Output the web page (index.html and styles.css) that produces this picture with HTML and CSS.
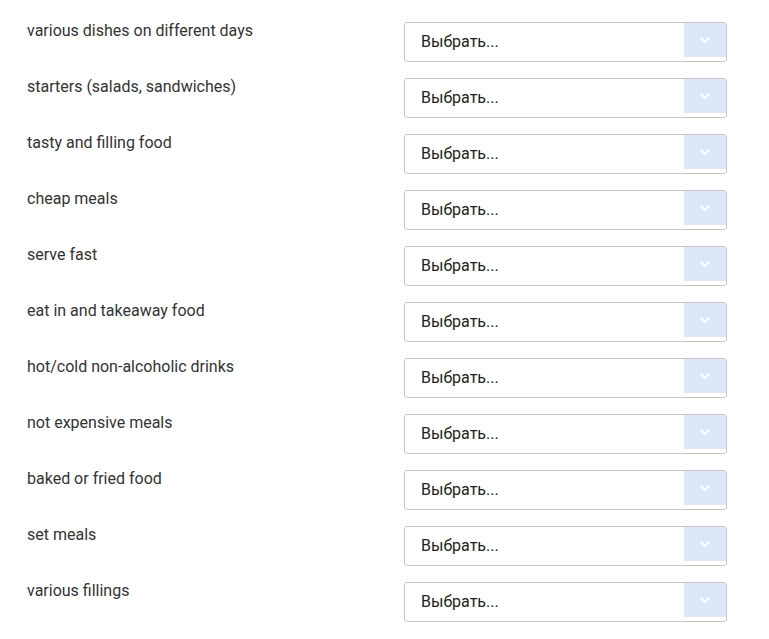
FILE: index.html
```html
<!DOCTYPE html>
<html>
<head>
<meta charset="utf-8">
<link rel="stylesheet" href="styles.css">
</head>
<body>
<div class="list">
  <div class="row"><div class="label">various dishes on different days</div><div class="select"><span class="value">Выбрать...</span><span class="btn"><svg width="10" height="6" viewBox="0 0 10 6"><path d="M1 1 L5 5 L9 1" fill="none" stroke="#fff" stroke-width="2.2"/></svg></span></div></div>
  <div class="row"><div class="label">starters (salads, sandwiches)</div><div class="select"><span class="value">Выбрать...</span><span class="btn"><svg width="10" height="6" viewBox="0 0 10 6"><path d="M1 1 L5 5 L9 1" fill="none" stroke="#fff" stroke-width="2.2"/></svg></span></div></div>
  <div class="row"><div class="label">tasty and filling food</div><div class="select"><span class="value">Выбрать...</span><span class="btn"><svg width="10" height="6" viewBox="0 0 10 6"><path d="M1 1 L5 5 L9 1" fill="none" stroke="#fff" stroke-width="2.2"/></svg></span></div></div>
  <div class="row"><div class="label">cheap meals</div><div class="select"><span class="value">Выбрать...</span><span class="btn"><svg width="10" height="6" viewBox="0 0 10 6"><path d="M1 1 L5 5 L9 1" fill="none" stroke="#fff" stroke-width="2.2"/></svg></span></div></div>
  <div class="row"><div class="label">serve fast</div><div class="select"><span class="value">Выбрать...</span><span class="btn"><svg width="10" height="6" viewBox="0 0 10 6"><path d="M1 1 L5 5 L9 1" fill="none" stroke="#fff" stroke-width="2.2"/></svg></span></div></div>
  <div class="row"><div class="label">eat in and takeaway food</div><div class="select"><span class="value">Выбрать...</span><span class="btn"><svg width="10" height="6" viewBox="0 0 10 6"><path d="M1 1 L5 5 L9 1" fill="none" stroke="#fff" stroke-width="2.2"/></svg></span></div></div>
  <div class="row"><div class="label">hot/cold non-alcoholic drinks</div><div class="select"><span class="value">Выбрать...</span><span class="btn"><svg width="10" height="6" viewBox="0 0 10 6"><path d="M1 1 L5 5 L9 1" fill="none" stroke="#fff" stroke-width="2.2"/></svg></span></div></div>
  <div class="row"><div class="label">not expensive meals</div><div class="select"><span class="value">Выбрать...</span><span class="btn"><svg width="10" height="6" viewBox="0 0 10 6"><path d="M1 1 L5 5 L9 1" fill="none" stroke="#fff" stroke-width="2.2"/></svg></span></div></div>
  <div class="row"><div class="label">baked or fried food</div><div class="select"><span class="value">Выбрать...</span><span class="btn"><svg width="10" height="6" viewBox="0 0 10 6"><path d="M1 1 L5 5 L9 1" fill="none" stroke="#fff" stroke-width="2.2"/></svg></span></div></div>
  <div class="row"><div class="label">set meals</div><div class="select"><span class="value">Выбрать...</span><span class="btn"><svg width="10" height="6" viewBox="0 0 10 6"><path d="M1 1 L5 5 L9 1" fill="none" stroke="#fff" stroke-width="2.2"/></svg></span></div></div>
  <div class="row"><div class="label">various fillings</div><div class="select"><span class="value">Выбрать...</span><span class="btn"><svg width="10" height="6" viewBox="0 0 10 6"><path d="M1 1 L5 5 L9 1" fill="none" stroke="#fff" stroke-width="2.2"/></svg></span></div></div>
</div>
</body>
</html>
```
FILE: styles.css
```css
html, body {
  margin: 0;
  padding: 0;
  background: #fff;
}
body {
  font-family: Roboto, "Liberation Sans", sans-serif;
  font-size: 16px;
  color: #333;
}
.list {
  padding: 22px 0 0 27px;
  display: flex;
  flex-direction: column;
  gap: 16px;
}
.row {
  display: flex;
  align-items: flex-start;
  height: 40px;
}
.label {
  width: 377px;
  line-height: 18px;
  padding-top: 0;
  color: #333;
}
.select {
  box-sizing: border-box;
  width: 323px;
  height: 40px;
  border: 1px solid #c6c6c6;
  border-radius: 3px;
  display: flex;
  align-items: flex-start;
  justify-content: space-between;
  background: #fff;
}
.value {
  padding-left: 16px;
  line-height: 38px;
  color: #222;
}
.btn {
  width: 42px;
  height: 34px;
  background: #dce8f7;
  border-radius: 0 2px 0 0;
  display: flex;
  align-items: center;
  justify-content: center;
}
.btn svg {
  display: block;
}
```
